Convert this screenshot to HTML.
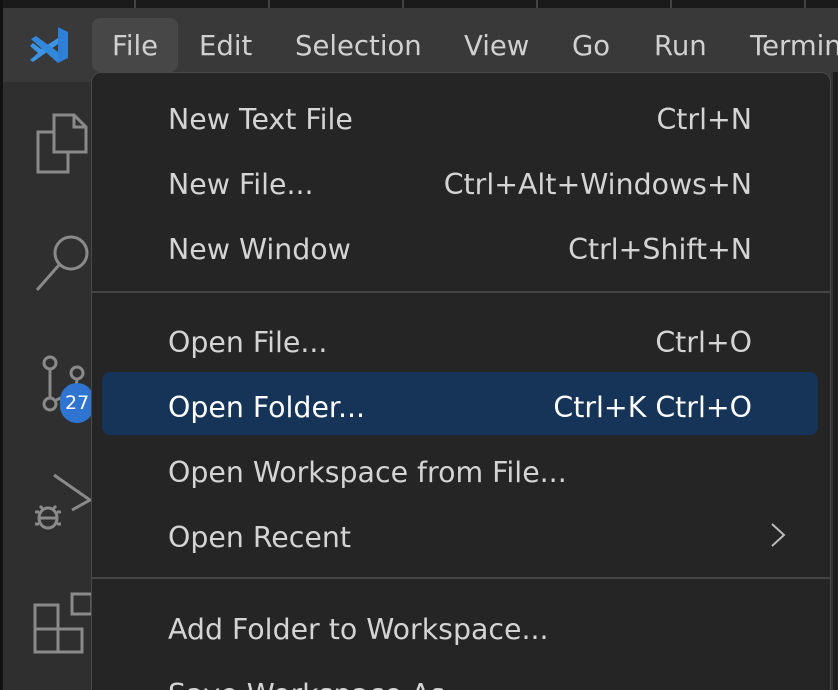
<!DOCTYPE html>
<html style="overflow:hidden;width:838px;height:690px"><head><style>
body{margin:0;width:838px;height:690px;overflow:hidden;background:#1f1f1f;font-family:"DejaVu Sans","Liberation Sans",sans-serif;position:relative}
.top{position:absolute;left:0;top:0;width:838px;height:8px;background:#1a1a1a}
.top i{position:absolute;top:0;width:2px;height:8px;background:#444}
.title{position:absolute;left:3px;top:8px;width:835px;height:74px;background:#393939}
.edge{position:absolute;left:0;top:0;width:3px;height:690px;background:#111}
.act{position:absolute;left:3px;top:82px;width:88px;height:608px;background:#2f2f2f}
.mb{position:absolute;top:30px;font-size:27.5px;color:#d0d0d0;white-space:nowrap}
.filebtn{position:absolute;left:92px;top:18px;width:86px;height:54px;background:#474747;border-radius:8px}
.menu{position:absolute;left:91px;top:72px;width:738px;height:640px;background:#252525;border:1px solid #4a4a4a;border-radius:10px}
.it{position:absolute;left:168px;font-size:28.4px;color:#d4d4d4;white-space:nowrap;margin-top:1px}
.sc{position:absolute;right:86px;font-size:28.4px;color:#d4d4d4;white-space:nowrap;margin-top:1px}
.sep{position:absolute;left:92px;width:738px;height:2px;background:#454545}
.hl{position:absolute;left:102px;top:372px;width:716px;height:63px;background:#163457;border-radius:8px}
.right{position:absolute;left:831px;top:72px;width:7px;height:618px;background:#1e1e1e;border-left:2px solid #333}
svg{position:absolute}
.clip{position:absolute;left:0;top:0;width:838px;height:690px;overflow:hidden}
</style></head><body><div class="clip">
<div class="top"><i style="left:134px"></i><i style="left:268px"></i><i style="left:402px"></i><i style="left:536px"></i><i style="left:670px"></i><i style="left:804px"></i></div>
<div class="title"></div>
<div class="edge"></div>
<div class="act"></div>
<svg style="left:28px;top:24px" width="44" height="42" viewBox="0 0 44 42"><path d="M30 3 L40 8 V34 L30 39 Z" fill="#2f7fd6"/><path d="M30 3 V14 L13 25 L5 19 L2 22 L10 29 L2 36 L5 38 L30 20 Z" fill="#3b95e6"/><path d="M30 39 V28 L8 12 L3 15 Z" fill="#3188dd"/></svg>
<div class="filebtn"></div>
<div class="mb" style="left:112px">File</div>
<div class="mb" style="left:199px">Edit</div>
<div class="mb" style="left:295px">Selection</div>
<div class="mb" style="left:464px">View</div>
<div class="mb" style="left:572px">Go</div>
<div class="mb" style="left:654px">Run</div>
<div class="mb" style="left:750px">Terminal</div>
<svg style="left:34px;top:112px" width="56" height="62" fill="none" stroke="#8a8a8a" stroke-width="3"><path d="M20 3 H40 L52 15 V40 H20 Z M40 3 V15 H52"/><path d="M20 20 H4 V60 H34 V40"/></svg>
<svg style="left:34px;top:232px" width="56" height="62" fill="none" stroke="#8a8a8a" stroke-width="3"><circle cx="37" cy="21" r="16"/><path d="M25 33 L3 58"/></svg>
<svg style="left:38px;top:352px" width="52" height="62" fill="none" stroke="#8a8a8a" stroke-width="3"><circle cx="12" cy="11" r="6"/><circle cx="39" cy="21" r="6"/><circle cx="12" cy="52" r="6"/><path d="M12 17 V46 M39 27 Q39 40 18 48"/></svg>
<div style="position:absolute;left:60px;top:383px;width:34px;height:40px;border-radius:20px;background:#2f74d0;color:#fff;font-size:19px;line-height:40px;text-indent:5px">27</div>
<svg style="left:32px;top:470px" width="60" height="66" fill="none" stroke="#8a8a8a" stroke-width="3"><path d="M22 5 L58 30 L40 40"/><ellipse cx="16" cy="48" rx="9" ry="10"/><path d="M3 42 H7 M3 54 H7 M25 42 H29 M25 54 H29 M8 36 L12 40 M24 36 L20 40 M7 48 H25"/></svg>
<svg style="left:32px;top:590px" width="60" height="66" fill="none" stroke="#8a8a8a" stroke-width="3"><path d="M3 15 H26 V62 H3 Z M3 39 H50 V62 H26 M40 4 H60 V24 H40 Z"/></svg>
<div class="right"></div>
<div class="menu"></div>
<div class="hl"></div>
<div class="sep" style="top:291px"></div>
<div class="sep" style="top:577px"></div>
<div class="it" style="top:102px">New Text File</div><div class="sc" style="top:102px">Ctrl+N</div>
<div class="it" style="top:167px">New File...</div><div class="sc" style="top:167px">Ctrl+Alt+Windows+N</div>
<div class="it" style="top:232px">New Window</div><div class="sc" style="top:232px">Ctrl+Shift+N</div>
<div class="it" style="top:325px">Open File...</div><div class="sc" style="top:325px">Ctrl+O</div>
<div class="it" style="top:390px;color:#fff">Open Folder...</div><div class="sc" style="top:390px;color:#fff">Ctrl+K Ctrl+O</div>
<div class="it" style="top:455px">Open Workspace from File...</div>
<div class="it" style="top:520px">Open Recent</div>
<svg style="left:768px;top:520px" width="20" height="30" fill="none" stroke="#bbb" stroke-width="2"><path d="M4 4 L16 15 L4 26"/></svg>
<div class="it" style="top:612px">Add Folder to Workspace...</div>
<div class="it" style="top:677px">Save Workspace As...</div>
</div></body></html>
